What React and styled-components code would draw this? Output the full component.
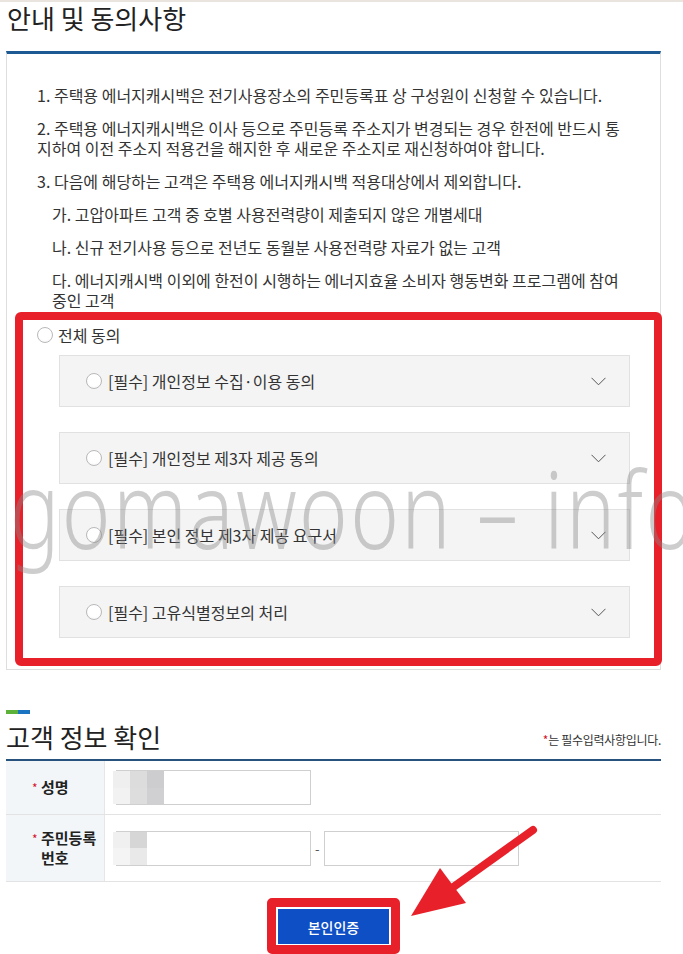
import React from "react";
import styled, { createGlobalStyle } from "styled-components";

const GlobalStyle = createGlobalStyle`
  html, body { margin: 0; padding: 0; background: #fff; }
  body {
    font-family: "Noto Sans CJK KR", "Noto Sans", sans-serif;
    color: #333;
  }
  * { box-sizing: border-box; }
`;

const Page = styled.div`
  position: relative;
  width: 683px;
  height: 954px;
  overflow: hidden;
  border-top: 2px solid #e9e5de;
  padding: 0 22px 0 6px;
`;

const Title = styled.h2`
  margin: 0;
  padding-left: 1px;
  font-size: 26px;
  font-weight: 400;
  line-height: 32px;
  color: #222;
`;

const NoticeBox = styled.div`
  margin-top: 17px;
  border: 1px solid #dedede;
  border-top: 3px solid #1d5a93;
  padding: 31px 36px 3px 30px;
`;

const List = styled.ol`
  list-style: none;
  margin: 0;
  padding: 0;
`;

const Item = styled.li`
  font-size: 16px;
  line-height: 20px;
  color: #333;
  margin-bottom: ${(p) => (p.$last ? 0 : 13)}px;
  padding-left: ${(p) => (p.$sub ? 15 : 0)}px;
`;

const ConsentFrame = styled.div`
  margin: 2px 0 0 -22px;
  width: 647px;
  border: 8px solid #e8202a;
  border-radius: 6px;
  padding: 5px 24px 20px 14px;
  background: #fff;
`;

const AllRow = styled.label`
  display: flex;
  align-items: center;
  gap: 5px;
  height: 20px;
  font-size: 16px;
  color: #333;
`;

const Radio = styled.span`
  display: inline-block;
  flex: none;
  width: 16px;
  height: 16px;
  border-radius: 50%;
  border: 1px solid #b9b9b9;
  background: radial-gradient(circle at 50% 40%, #fff 55%, #f0f0f0 100%);
`;

const AccordionList = styled.div`
  display: flex;
  flex-direction: column;
  gap: 25px;
  margin: 10px 0 0 22px;
`;

const Accordion = styled.div`
  display: flex;
  align-items: center;
  height: 52px;
  background: #f4f4f4;
  border: 1px solid #e1e1e1;
  padding: 0 23px 0 26px;
  font-size: 16px;
  color: #333;
`;

const AccLabel = styled.span`
  flex: 1;
  display: flex;
  align-items: center;
  gap: 6px;
`;

const Chevron = () => (
  <svg width="15" height="9" viewBox="0 0 15 9" fill="none">
    <polyline points="0.5,0.8 7.5,7.8 14.5,0.8" stroke="#555" strokeWidth="1" />
  </svg>
);

const SectionMark = styled.div`
  margin-top: 40px;
  width: 24px;
  height: 4px;
  background: linear-gradient(to right, #5cb238 50%, #1b74c2 50%);
`;

const HeadRow = styled.div`
  display: flex;
  justify-content: space-between;
  align-items: flex-end;
  margin-top: 7px;
`;

const Heading = styled.h3`
  margin: 0;
  font-size: 26px;
  font-weight: 400;
  line-height: 32px;
  color: #222;
`;

const Note = styled.span`
  font-size: 12px;
  line-height: 16px;
  color: #333;
  margin-bottom: 5px;
  letter-spacing: -0.3px;
`;

const Star = styled.span`
  color: #d3132a;
`;

const Table = styled.div`
  margin-top: 6px;
  border-top: 2px solid #27527e;
`;

const Row = styled.div`
  display: grid;
  grid-template-columns: 99px 1fr;
  height: ${(p) => p.$h}px;
  border-bottom: 1px solid #e3e3e3;
`;

const LabelCell = styled.div`
  background: #f3f6f9;
  border-right: 1px solid #e6e6e6;
  display: flex;
  align-items: center;
  padding-left: 26px;
`;

const LabelInner = styled.div`
  display: flex;
  align-items: flex-start;
`;

const LabelStar = styled.span`
  color: #d3132a;
  font-size: 12px;
  line-height: 22px;
  width: 9px;
`;

const LabelText = styled.span`
  font-size: 15px;
  font-weight: 700;
  line-height: 20px;
  color: #222;
  max-width: 62px;
`;

const FieldCell = styled.div`
  display: flex;
  align-items: center;
  gap: 4px;
  padding-left: 11px;
  font-size: 13px;
  color: #555;
`;

const Input = styled.div`
  width: 195px;
  height: 35px;
  border: 1px solid #cfcfcf;
  background: #fff;
  display: flex;
  align-items: stretch;
`;

const Mosaic = styled.div`
  display: grid;
  grid-template-columns: repeat(${(p) => p.$cols}, 17px);
  grid-template-rows: repeat(2, 1fr);
  margin-left: -4px;
  width: max-content;
`;

const Tile = styled.span`
  background: ${(p) => p.$c};
`;

const ButtonArea = styled.div`
  display: flex;
  justify-content: center;
  margin-top: 16px;
`;

const ButtonFrame = styled.div`
  border: 9px solid #e8202a;
  border-radius: 5px;
  padding: 2px 2px 1px 2px;
  background: #fff;
`;

const Button = styled.button`
  width: 111px;
  height: 35px;
  border: 0;
  background: #0f4fc6;
  color: #fff;
  font-family: "Noto Sans CJK KR", sans-serif;
  font-size: 14px;
  font-weight: 500;
  display: block;
`;

const Watermark = styled.div`
  position: absolute;
  left: 10px;
  top: 434px;
  font-family: "Noto Sans", sans-serif;
  font-weight: 300;
  font-size: 106px;
  letter-spacing: 3px;
  color: rgba(135, 135, 135, 0.42);
  white-space: nowrap;
  pointer-events: none;
  transform: scaleX(0.78);
  transform-origin: left top;
`;

const ArrowLayer = styled.svg`
  position: absolute;
  left: 0;
  top: 0;
  pointer-events: none;
`;

const consents = [
  "[필수] 개인정보 수집·이용 동의",
  "[필수] 개인정보 제3자 제공 동의",
  "[필수] 본인 정보 제3자 제공 요구서",
  "[필수] 고유식별정보의 처리",
];

export default function App() {
  return (
    <>
      <GlobalStyle />
      <Page>
        <Title>안내 및 동의사항</Title>
        <NoticeBox>
          <List>
            <Item>1. 주택용 에너지캐시백은 전기사용장소의 주민등록표 상 구성원이 신청할 수 있습니다.</Item>
            <Item>2. 주택용 에너지캐시백은 이사 등으로 주민등록 주소지가 변경되는 경우 한전에 반드시 통지하여 이전 주소지 적용건을 해지한 후 새로운 주소지로 재신청하여야 합니다.</Item>
            <Item>3. 다음에 해당하는 고객은 주택용 에너지캐시백 적용대상에서 제외합니다.</Item>
            <Item $sub>가. 고압아파트 고객 중 호별 사용전력량이 제출되지 않은 개별세대</Item>
            <Item $sub>나. 신규 전기사용 등으로 전년도 동월분 사용전력량 자료가 없는 고객</Item>
            <Item $sub $last>다. 에너지캐시백 이외에 한전이 시행하는 에너지효율 소비자 행동변화 프로그램에 참여 중인 고객</Item>
          </List>
          <ConsentFrame>
            <AllRow>
              <Radio />
              전체 동의
            </AllRow>
            <AccordionList>
              {consents.map((c) => (
                <Accordion key={c}>
                  <AccLabel>
                    <Radio />
                    {c}
                  </AccLabel>
                  <Chevron />
                </Accordion>
              ))}
            </AccordionList>
          </ConsentFrame>
        </NoticeBox>

        <SectionMark />
        <HeadRow>
          <Heading>고객 정보 확인</Heading>
          <Note>
            <Star>*</Star>는 필수입력사항입니다.
          </Note>
        </HeadRow>
        <Table>
          <Row $h={54}>
            <LabelCell>
              <LabelInner>
                <LabelStar>*</LabelStar>
                <LabelText>성명</LabelText>
              </LabelInner>
            </LabelCell>
            <FieldCell>
              <Input>
                <Mosaic $cols={3}>
                  <Tile $c="#efefef" />
                  <Tile $c="#dcdcdc" />
                  <Tile $c="#cdcdcf" />
                  <Tile $c="#f2f2f2" />
                  <Tile $c="#dddddd" />
                  <Tile $c="#d0d0d2" />
                </Mosaic>
              </Input>
            </FieldCell>
          </Row>
          <Row $h={67}>
            <LabelCell>
              <LabelInner>
                <LabelStar>*</LabelStar>
                <LabelText>주민등록 번호</LabelText>
              </LabelInner>
            </LabelCell>
            <FieldCell>
              <Input>
                <Mosaic $cols={2}>
                  <Tile $c="#f0f0f0" />
                  <Tile $c="#d6d6d6" />
                  <Tile $c="#f4f4f4" />
                  <Tile $c="#e9e9e9" />
                </Mosaic>
              </Input>
              -
              <Input />
            </FieldCell>
          </Row>
        </Table>
        <ButtonArea>
          <ButtonFrame>
            <Button>본인인증</Button>
          </ButtonFrame>
        </ButtonArea>

        <Watermark>gomawoon – info</Watermark>
        <ArrowLayer width="683" height="954" viewBox="0 0 683 954">
          <line x1="533" y1="828" x2="452" y2="886" stroke="#e8202a" strokeWidth="8" strokeLinecap="round" />
          <polygon points="411,914 440,866 466,901" fill="#e8202a" />
        </ArrowLayer>
      </Page>
    </>
  );
}
